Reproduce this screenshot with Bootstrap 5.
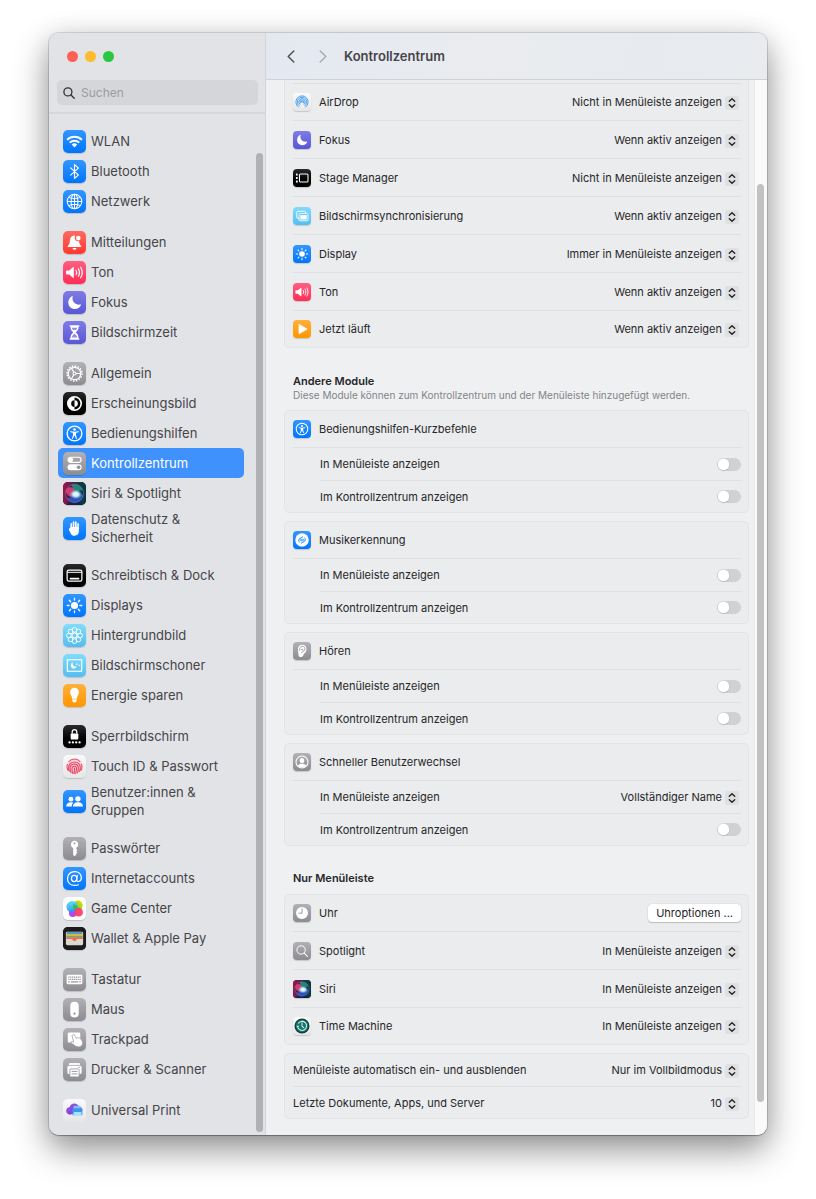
<!DOCTYPE html>
<html lang="de">
<head>
<meta charset="utf-8">
<meta name="viewport" content="width=device-width, initial-scale=1">
<title>Kontrollzentrum</title>
<link href="https://cdn.jsdelivr.net/npm/bootstrap@5.3.0/dist/css/bootstrap.min.css" rel="stylesheet">
<style>
  body { font-family: Inter, "Liberation Sans", sans-serif; font-size: 12px; line-height: 16px; color: #262628; background: #fff; padding: 33px 49px 65px; }
  .window { border-radius: 10px; background: #eff0f2; box-shadow: 0 0 0 1px rgba(0,0,0,.12), 0 1px 1px rgba(0,0,0,.25), 0 14px 34px rgba(0,0,0,.44), 0 0 24px rgba(0,0,0,.06); }

  /* Sidebar */
  .sidebar { width: 217px; background: #e2e3e7; border-right: 1px solid #d3d4d8; border-radius: 10px 0 0 10px; }
  .sidebar-head { padding: 18px 7px 7px 8px; border-bottom: 2px solid #d6d7db; }
  .lights { gap: 7px; padding-left: 10px; margin-bottom: 18px; }
  .light { width: 11px; height: 11px; border-radius: 50%; border: 0; padding: 0; }
  .light-close { background: #fe5f57; }
  .light-min { background: #febb2e; }
  .light-max { background: #28c840; }
  .search { height: 25px; padding: 0 6px; gap: 6px; border-radius: 5px; background: #d5d6d9; }
  .search input { min-width: 0; flex: 1; border: 0; padding: 0; background: transparent; font-size: 12px; outline: 0; }
  .search input::placeholder { color: #9b9ca0; opacity: 1; }
  .nav-area { padding: 12px 0 9px 9px; }
  .nav-group + .nav-group { margin-top: 11px; }
  .side-link { display: flex; align-items: center; gap: 5px; min-height: 30px; padding: 3px 5px; border-radius: 5px; font-size: 13px; line-height: 18px; color: #454548; text-decoration: none; }
  .side-link.two-line { min-height: 41px; padding: 2px 5px 3px; }
  .side-link.active { background: #3f92fe; color: #fff; }
  .thumb { width: 7px; border-radius: 4px; flex: none; }
  .side-thumb { background: #b0b1b4; margin: 39px 2px 3px 12px; }

  /* App icon tiles */
  .tile { width: 23px; height: 23px; flex: none; border-radius: 5px; box-shadow: 0 1px 1px rgba(0,0,0,.16); color: #fff; overflow: hidden; }
  .tile-sm { width: 18px; height: 18px; border-radius: 4px; }
  .tile svg { display: block; width: 100%; height: 100%; }
  .t-blue { background: linear-gradient(#3296ff, #0075fb); }
  .t-red { background: linear-gradient(#ff6a60, #ff3a30); }
  .t-pink { background: linear-gradient(#ff5f83, #ff2d55); }
  .t-indigo { background: linear-gradient(#7f7ce6, #5856d6); }
  .t-gray { background: linear-gradient(#b2b2b6, #8c8c90); }
  .t-black { background: linear-gradient(#2a2a2a, #000 60%); }
  .t-cyan { background: linear-gradient(#80dcfa, #54bdf0); }
  .t-orange { background: linear-gradient(#ffb13b, #ff9500); }
  .t-white { background: linear-gradient(#fafafa, #e6e6e6); }
  .t-paper { background: #fff; }

  /* Main pane */
  .titlebar { height: 47px; padding: 0 21px; gap: 24px; border-bottom: 1px solid #cfd1d5; border-top-right-radius: 10px; background: linear-gradient(100deg, #e4e8f1 0%, #eaecef 45%, #e7ebef 75%, #e9ebef 100%); }
  .titlebar h1 { font-size: 13px; line-height: 18px; font-weight: 600; color: #454548; margin: 0 0 0 -7px; }
  .navbtn { border: 0; background: none; padding: 0; width: 8px; height: 14px; display: flex; align-items: center; }
  .pane { padding: 0 5px 16px 18px; min-width: 0; }
  .track { padding: 0 3px 0 2px; border-left: 1px solid #e9eaeb; background: #fafafa; border-bottom-right-radius: 10px; }
  .main-thumb { background: #c2c2c3; margin: 104px 0 33px; }
  .panel { border: 1px solid #e3e4e6; border-radius: 5px; background: #ebecee; padding: 0 7px 0 8px; }
  .panel + .panel { margin-top: 8px; }
  .panel-cut { border-top: 0; border-radius: 0 0 5px 5px; padding-top: 3px; }
  .panel-cut > :first-child { border-top: 1px solid #dfe0e2; }
  .entry { display: flex; align-items: center; justify-content: space-between; height: 38px; border-bottom: 1px solid #dfe0e2; }
  .entry:first-child { height: 37px; }
  .panel-cut .entry:first-child { height: 38px; }
  .entry:last-child { border-bottom: 0; height: 36px; }
  .entry.low { height: 33px; }
  .entry.low:last-child { height: 31px; }
  .entry.sub { margin-left: 27px; }
  .entry-name { display: flex; align-items: center; gap: 8px; }
  .section-head { padding: 25px 0 8px; }
  .section-head.first-head { padding-top: 26px; }
  .pane h2 { font-size: 11px; line-height: 15px; font-weight: 600; margin: 0; padding-left: 9px; }
  .hint { font-size: 10px; line-height: 13px; color: #838487; margin: 0; padding-left: 9px; }
  .entry, .picker, .push { font-size: 11px; line-height: 16px; }
  .picker { appearance: none; border: 0; margin: 0 2px 0 0; padding: 0 17px 0 0; height: 16px; color: inherit; text-align-last: right; outline-offset: 2px;
    background: url("data:image/svg+xml,%3Csvg xmlns='http://www.w3.org/2000/svg' viewBox='0 0 14 14'%3E%3Crect width='14' height='14' rx='3' fill='%23dfe0e2'/%3E%3Cpath d='M4.3 5.3L7 2.8l2.7 2.5M4.3 8.7L7 11.2l2.7-2.5' fill='none' stroke='%23242426' stroke-width='1.4' stroke-linecap='round' stroke-linejoin='round'/%3E%3C/svg%3E") right bottom / 14px 14px no-repeat; }
  .toggle.form-check-input { width: 24px; height: 13px; margin: 0; border: 0; border-radius: 7px; background-color: #d0d1d3;
    background-image: url("data:image/svg+xml,%3Csvg xmlns='http://www.w3.org/2000/svg' viewBox='0 0 13 13'%3E%3Ccircle cx='6.5' cy='6.8' r='6.2' fill='%23b4b5b7'/%3E%3Ccircle cx='6.5' cy='6.4' r='5.8' fill='%23fff'/%3E%3C/svg%3E"); background-size: 13px 13px; background-position: left center; }
  .toggle.form-check-input:checked { background-color: #3f92fe; background-position: right center; }
  .push { border: 0; border-radius: 4px; background: #fff; color: inherit; height: 18px; padding: 0 8px; box-shadow: 0 0 1px rgba(0,0,0,.3), 0 1px 1px rgba(0,0,0,.18); }
  @media (max-width: 600px) {
    body { padding: 12px; }
    .window { flex-direction: column; }
    .sidebar { width: auto; border-radius: 10px 10px 0 0; }
  }
</style>
</head>
<body>

<svg width="0" height="0" class="position-absolute" aria-hidden="true">
  <defs>
    <radialGradient id="g-orb" cx=".5" cy=".5" r=".5"><stop offset="0" stop-color="#fff"/><stop offset=".45" stop-color="#c4ecfa"/><stop offset="1" stop-color="#5aa8e0" stop-opacity="0"/></radialGradient>
    <linearGradient id="g-siri" x1="0" y1=".35" x2="1" y2=".5"><stop offset="0" stop-color="#a01448"/><stop offset=".25" stop-color="#6e1c50"/><stop offset=".6" stop-color="#123c4c"/><stop offset="1" stop-color="#043a40"/></linearGradient>
    <linearGradient id="g-up" x1="0" y1="0" x2="1" y2="1"><stop offset="0" stop-color="#a05be8"/><stop offset="1" stop-color="#6a35c8"/></linearGradient>
    <linearGradient id="g-gc1" x1="0" y1="0" x2="0" y2="1"><stop offset="0" stop-color="#4fdcf4"/><stop offset="1" stop-color="#2c8cf5"/></linearGradient>
    <linearGradient id="g-gc2" x1="1" y1="0" x2="0" y2="1"><stop offset="0" stop-color="#ffe000"/><stop offset="1" stop-color="#3ecb3c"/></linearGradient>
  </defs>
  <symbol id="i-wifi" viewBox="0 0 24 24"><g fill="none" stroke="currentColor" stroke-width="2"><path d="M4.3 10.2a11 11 0 0 1 15.4 0"/><path d="M7 13.2a7.2 7.2 0 0 1 10 0"/></g><path d="M12 18.2l-2.9-3a4.2 4.2 0 0 1 5.8 0z" fill="currentColor"/></symbol>
  <symbol id="i-bt" viewBox="0 0 24 24"><path d="M8 8.2l8 7.4-4 3.6V4.8l4 3.6-8 7.4" fill="none" stroke="currentColor" stroke-width="1.2" stroke-linejoin="round" stroke-linecap="round"/></symbol>
  <symbol id="i-globe" viewBox="0 0 24 24"><g fill="none" stroke="currentColor" stroke-width="1.1"><circle cx="12" cy="12" r="7.6"/><ellipse cx="12" cy="12" rx="3.6" ry="7.6"/><path d="M12 4.4v15.2M4.4 12h15.2M6 7.7c3.500 1.600 8.500 1.600 12 0M6 16.300c3.500-1.600 8.500-1.600 12 0"/></g></symbol>
  <symbol id="i-bell" viewBox="0 0 24 24"><path fill="currentColor" d="M12.600 5.400a3.600 3.600 0 0 0 4.200 5.200c.2 2.700 1 3.800 2 4.700.6.600.2 1.500-.6 1.500H5.800c-.8 0-1.200-.9-.6-1.500 1.100-1.100 1.800-2.200 2-5.200.2-2.800 1.500-4.600 3.500-5.100.5-.9 1.500-.7 1.900.4z"/><path fill="currentColor" d="M10 17.700h4c-.2 1.100-.9 1.900-2 1.900s-1.800-.8-2-1.900z"/><circle cx="16" cy="7.400" r="2.400" fill="currentColor"/></symbol>
  <symbol id="i-sound" viewBox="0 0 24 24"><path fill="currentColor" d="M4 9.800h2.500l3.800-3.300c.4-.4 1-.1 1 .5v10c0 .6-.6.900-1 .5l-3.800-3.300H4c-.5 0-.8-.3-.8-.8v-2.800c0-.5.3-.8.8-.8z"/><path d="M13.600 9.700c.9 1.500.9 3.100 0 4.600M16 8c1.500 2.600 1.500 5.400 0 8M18.400 6.500c2.200 3.600 2.200 7.400 0 11" fill="none" stroke="currentColor" stroke-width="1.200" stroke-linecap="round"/></symbol>
  <symbol id="i-moon" viewBox="0 0 24 24"><path fill="currentColor" d="M10.200 5.300c-1.600 4.900 2.200 9.900 8.300 8.800.3 0 .5.200.3.500-1.200 2.800-3.600 4.300-6.300 4.300-3.900 0-7-3.100-7-6.900 0-3 1.700-5.700 4.300-6.900.3-.2.500 0 .4.200z"/></symbol>
  <symbol id="i-hour" viewBox="0 0 24 24"><path fill="currentColor" d="M7 4.500h10v1.600h-.8c0 3-1 4.400-3 5.900 2 1.500 3 2.900 3 5.900h.8v1.600H7v-1.600h.8c0-3 1-4.400 3-5.900-2-1.500-3-2.900-3-5.900H7z"/><path d="M9.300 7h5.400c-.2 1.200-.6 2-1.200 2.500h-3C9.900 9 9.500 8.200 9.300 7zM12 13.200c1.800 1.200 2.500 2 2.700 4H9.300c.2-2 .9-2.800 2.700-4z" fill="#6b68de" opacity=".75"/></symbol>
  <symbol id="i-gear" viewBox="0 0 24 24"><g fill="none" stroke="currentColor"><circle cx="12" cy="12" r="7.800" stroke-width="1.600" stroke-dasharray="1.600 1.460"/><circle cx="12" cy="12" r="6.500" stroke-width="1.300"/><path d="M12 12h6.500M12 12L8.800 6.400M12 12l-3.200 5.600" stroke-width="1.100"/><circle cx="12" cy="12" r="1.600" stroke-width="1.100" fill="#a0a0a4"/></g></symbol>
  <symbol id="i-look" viewBox="0 0 24 24"><circle cx="12" cy="12" r="7" fill="none" stroke="currentColor" stroke-width="1.700"/><path fill="currentColor" d="M12 5a7 7 0 0 0 0 14v-3.500a3.500 3.500 0 0 1 0-7z"/><path fill="currentColor" d="M12 8.500a3.500 3.500 0 0 1 0 7z"/></symbol>
  <symbol id="i-access" viewBox="0 0 24 24"><circle cx="12" cy="12" r="7.700" fill="none" stroke="currentColor" stroke-width="1.400"/><circle cx="12" cy="7.900" r="1.300" fill="currentColor"/><path fill="currentColor" d="M8 9.600l4 .6 4-.6c.6 0 .7.800.1 1l-2.500.7v2.300l1 3.500c.1.600-.7.800-.9.300L12 13.900l-1.700 3.500c-.2.500-1 .3-.9-.3l1-3.500v-2.300l-2.500-.7c-.6-.2-.5-1 .1-1z"/></symbol>
  <symbol id="i-switches" viewBox="0 0 24 24"><rect x="5.300" y="5.500" width="13.600" height="5.400" rx="2.700" fill="none" stroke="currentColor" stroke-width="1.200"/><circle cx="8.200" cy="8.200" r="2.400" fill="currentColor"/><rect x="4.700" y="12.700" width="14.800" height="6.400" rx="3.200" fill="currentColor"/><circle cx="16.300" cy="15.900" r="1.900" fill="#909094"/></symbol>
  <symbol id="i-siri" viewBox="0 0 24 24"><path fill="url(#g-siri)" d="M0 0h24v24H0z"/><path fill="#0a1650" opacity=".6" d="M3 24c4-6 14-6 18 0z"/><circle cx="12" cy="12" r="9.500" fill="#1a2250" opacity=".55"/><path d="M9 3a9.500 9.500 0 0 1 11.800 5.600c-3.200-.2-6 .8-8.800 3.400z" fill="#22a57f" opacity=".75"/><path d="M2.800 10c1-5 6-6 8.700-2.500L13 13.500c-3.500 3.500-8 2.500-10.200-3.500z" fill="#ee3f78" opacity=".85"/><path d="M4 16.500c3 .5 6-.5 8-3l9.400-.5c-1 5.500-5 8.500-9.400 8.500-3.500 0-6.500-2-8-5z" fill="#3560dc" opacity=".75"/><circle cx="12" cy="12" r="9.500" fill="none" stroke="#b9a0b8" stroke-width=".7" opacity=".6"/><ellipse cx="13.400" cy="12.800" rx="7" ry="5.200" fill="url(#g-orb)"/></symbol>
  <symbol id="i-hand" viewBox="0 0 24 24"><g stroke="currentColor" stroke-width="1.700" stroke-linecap="round" fill="none"><path d="M8.600 12V7M11 11V5.200M13.400 11V5.400M15.700 12V7.200M7 12.800l1.800 2.600"/></g><path fill="currentColor" d="M7.750 10.500h8.800v4.200c0 3-1.700 4.900-4.400 4.900-2.100 0-3.300-.9-4.200-2.700l-1.700-3.600z"/></symbol>
  <symbol id="i-dock" viewBox="0 0 24 24"><rect x="4.300" y="6.300" width="15.400" height="11.600" rx="1.800" fill="none" stroke="currentColor" stroke-width="1.300"/><path d="M4.500 8.700h15" stroke="currentColor" stroke-width="1"/><rect x="7" y="14.300" width="10" height="2" rx=".6" fill="currentColor"/></symbol>
  <symbol id="i-sun" viewBox="0 0 24 24"><circle cx="12" cy="12" r="3.700" fill="currentColor"/><path d="M12 4.400v1.900M12 17.700v1.900M4.400 12h1.900M17.700 12h1.900M6.600 6.600L8 8M16 16l1.400 1.400M6.600 17.400L8 16M16 8l1.400-1.400" stroke="currentColor" stroke-width="1.400" stroke-linecap="round"/></symbol>
  <symbol id="i-flower" viewBox="0 0 24 24"><g fill="none" stroke="currentColor" stroke-width="1"><circle cx="12" cy="12" r="2.500"/><circle cx="12" cy="6.200" r="2.500"/><circle cx="17.800" cy="12" r="2.500"/><circle cx="12" cy="17.800" r="2.500"/><circle cx="6.200" cy="12" r="2.500"/><circle cx="16.100" cy="7.900" r="2.500"/><circle cx="16.100" cy="16.100" r="2.500"/><circle cx="7.900" cy="16.100" r="2.500"/><circle cx="7.900" cy="7.900" r="2.500"/></g></symbol>
  <symbol id="i-saver" viewBox="0 0 24 24"><rect x="4.500" y="6" width="15" height="12" fill="none" stroke="currentColor" stroke-width="1.200"/><path fill="currentColor" d="M10.300 8.700c-1 2.800 1.200 4.900 4 4.400-.6 1.500-1.900 2.300-3.300 2.300a3.500 3.500 0 0 1-.7-6.700zM14.500 9.200l.4 1 1 .4-1 .4-.4 1-.4-1-1-.4 1-.4zM17 10.800l.3.800.8.300-.8.300-.3.800-.3-.8-.8-.3.800-.3z"/></symbol>
  <symbol id="i-bulb" viewBox="0 0 24 24"><path fill="currentColor" d="M12 4a4.600 4.600 0 0 1 4.600 4.600c0 2.600-1.900 3.500-2.200 6.700H9.600c-.3-3.200-2.200-4.100-2.200-6.700A4.600 4.600 0 0 1 12 4zM9.700 16h4.600v1.200c0 1.300-.8 2.100-2.300 2.100s-2.300-.8-2.300-2.100z"/></symbol>
  <symbol id="i-lock" viewBox="0 0 24 24"><rect x="8" y="8.800" width="8" height="6.200" rx="1" fill="currentColor"/><path d="M9.600 9V7.300a2.400 2.400 0 0 1 4.800 0V9" fill="none" stroke="currentColor" stroke-width="1.300"/><g fill="currentColor"><circle cx="6.800" cy="18.200" r="1.200"/><circle cx="10.300" cy="18.200" r="1.200"/><circle cx="13.800" cy="18.200" r="1.200"/><circle cx="17.300" cy="18.200" r="1.200"/></g></symbol>
  <symbol id="i-touch" viewBox="0 0 24 24"><circle cx="12" cy="12" r="7.600" fill="#f58a9d" opacity=".35"/><g fill="none" stroke="#ee3f60" stroke-width="1.100" stroke-linecap="round"><path d="M6.200 6.800a7.700 7.700 0 0 1 11.600 0M4.600 9.800c-.8 2.300-.3 4.500.5 6M19.300 9.500c.7 2 .6 4.300-.5 6.500M6.500 16.900c-1.500-4.500-.2-9.600 5.500-9.600 5.800 0 7 5.600 5.200 9.800M8.300 18.400c-1.600-4.700-1.300-9 3.700-9 4.700 0 4.500 5.200 3.200 9.200M10.200 19.200c-1.300-4-1.300-7.700 1.700-7.700 3 0 2.400 4.300 1.300 7.900M12 13.600c.2 2 0 4-.5 5.700"/></g></symbol>
  <symbol id="i-users" viewBox="0 0 24 24"><g fill="currentColor"><circle cx="8.300" cy="9.600" r="2.500"/><circle cx="15.600" cy="9.200" r="2.800"/><path d="M3.300 17.300c0-2.700 2.100-4.400 5-4.400.9 0 1.600.1 2.300.4-1 1-1.500 2.300-1.500 4zM10.300 17.300c0-2.800 2.100-4.600 5.300-4.600s5.300 1.800 5.300 4.600z"/></g></symbol>
  <symbol id="i-key" viewBox="0 0 24 24"><path fill="currentColor" fill-rule="evenodd" d="M12 3.800a4 4 0 0 1 1.800 7.500v1.300l1.200 1.200-1.200 1.200 1.200 1.300-1.200 1.200v1L12 20l-1.400-1.300v-7.300A4 4 0 0 1 12 3.800zm0 1.700a1.100 1.100 0 1 0 0 2.200 1.100 1.100 0 0 0 0-2.200z"/></symbol>
  <symbol id="i-at" viewBox="0 0 24 24"><g fill="none" stroke="currentColor" stroke-width="1.300" stroke-linecap="round"><ellipse cx="11.600" cy="12" rx="2.800" ry="3.200"/><path d="M14.800 8.800l-.6 4.600c-.2 2.500 4.900 2.600 4.900-2.100 0-4-3-6.600-6.900-6.600-4.400 0-7.500 3.200-7.500 7.400 0 4.400 3.100 7.200 7.500 7.200 1.500 0 2.800-.3 3.800-.8"/></g></symbol>
  <symbol id="i-game" viewBox="0 0 24 24"><circle cx="10.200" cy="16.900" r="4" fill="#b14af0"/><circle cx="15.600" cy="8.700" r="5" fill="url(#g-gc2)"/><circle cx="9.600" cy="10.300" r="6" fill="url(#g-gc1)" opacity=".92"/><path d="M11 7.500a5 5 0 0 1 4.500 4.500 5 5 0 0 1-3.500 1.600 5 5 0 0 1-1-6.100z" fill="#2fc05a"/><circle cx="16.300" cy="15.800" r="4.500" fill="#ff3b6b" opacity=".93"/></symbol>
  <symbol id="i-wallet" viewBox="0 0 24 24"><path fill="#1b1b1c" d="M0 0h24v24H0z"/><rect x="3" y="5" width="18" height="14" rx="1.500" fill="#dcd9cc"/><path fill="#4d9ccc" d="M4.300 5.300h15.400l.8 2h-17z"/><path fill="#e9b43a" d="M3.500 7.300h17v1.800h-17z"/><path fill="#68b35a" d="M3.500 9h17v2h-17z"/><path fill="#ec6a5b" d="M3.500 10.800h17v1.600h-5.200c-.7 0-1 .3-1.300.8-.4 1-1.100 1.500-2 1.500s-1.600-.5-2-1.500c-.3-.5-.6-.8-1.300-.8H3.500z"/></symbol>
  <symbol id="i-keyb" viewBox="0 0 24 24"><rect x="3.800" y="7" width="16.400" height="10" rx="1.400" fill="currentColor"/><path d="M5.500 9.400h13M5.500 11.800h13" stroke="#96969a" stroke-width="1.300" stroke-dasharray="1.300 .65"/><path d="M5.500 14.400h1.600M8.200 14.400h7.600M16.900 14.400h1.600" stroke="#96969a" stroke-width="1.200"/></symbol>
  <symbol id="i-mouse" viewBox="0 0 24 24"><rect x="7.600" y="4" width="8.800" height="16.300" rx="4.200" fill="currentColor"/><path d="M12 14.800c.8.500 1.200 1 1.200 1.600a1.200 1.200 0 0 1-2.400 0c0-.6.400-1.100 1.200-1.600z" fill="#929296"/></symbol>
  <symbol id="i-track" viewBox="0 0 24 24"><rect x="5" y="4.600" width="13" height="10.600" rx="1.300" fill="currentColor"/><path d="M10 7.200c.8-.8 2-.3 2.300.6l1.500 3c1.800-.9 3.400-.9 4.500.4 2.600 2.700 3 5.300 1 7.300-2.300 1.900-5 1.500-7.300-.4l-3.200-2.300c-1-1 .1-2.100 1.400-1.500l.9.500L9.500 8.300c-.1-.4.100-.8.500-1.100z" fill="currentColor" stroke="#9a9a9e" stroke-width=".8"/></symbol>
  <symbol id="i-print" viewBox="0 0 24 24"><path fill="currentColor" d="M7.500 5.200h9c.8 0 1.300.5 1.300 1.200v.8H6.200v-.8c0-.7.500-1.200 1.300-1.200z" opacity=".9"/><rect x="4.600" y="8" width="14.800" height="8.600" rx="1.600" fill="currentColor"/><rect x="7.200" y="11.400" width="9.600" height="8.300" rx=".8" fill="currentColor" stroke="#98989c" stroke-width=".9"/><path d="M9 14h6M9 16.600h6" stroke="#98989c" stroke-width="1"/><circle cx="16.900" cy="9.800" r=".7" fill="#98989c"/></symbol>
  <symbol id="i-uprint" viewBox="0 0 24 24"><path d="M7.300 16.400c-2.200 0-4-1.700-4-3.800 0-2.200 1.500-3.800 3.500-3.900.6-2.400 2.500-4.100 5-4.100 2.300 0 4.300 1.500 4.900 3.600 2.300.2 3.500 1.600 3.500 3.700z" fill="url(#g-up)"/><path d="M11.500 7h6.500l1 3.500h-8.500z" fill="#7cc4f5"/><rect x="9.800" y="9.700" width="10.400" height="7.500" rx="1" fill="#3f94ee"/><path d="M11.300 13.600h7.700l.6 4.200h-9z" fill="#a6e4ff"/></symbol>
  <symbol id="i-airdrop" viewBox="0 0 24 24"><g fill="none" stroke="#2c8ff2" stroke-width="1.150" stroke-linecap="round"><path d="M7.200 18.700a8.200 8.200 0 1 1 9.600 0M8.200 16.800a6.200 6.200 0 1 1 7.600 0M9.300 15a4.200 4.200 0 1 1 5.400 0M10.200 13.200a2.300 2.300 0 1 1 3.600 0"/></g><path d="M12 12l3.400 7H8.600z" fill="#f2f2f3"/><circle cx="12" cy="11.700" r="1.100" fill="#2c8ff2"/></symbol>
  <symbol id="i-stage" viewBox="0 0 24 24"><rect x="8.600" y="6.700" width="11.400" height="10.600" rx="1.400" fill="none" stroke="currentColor" stroke-width="1.400"/><g fill="currentColor"><rect x="3.900" y="6" width="2.400" height="2.800" rx=".5"/><rect x="3.900" y="10.600" width="2.400" height="2.800" rx=".5"/><rect x="3.900" y="15.200" width="2.400" height="2.800" rx=".5"/></g></symbol>
  <symbol id="i-mirror" viewBox="0 0 24 24"><rect x="5" y="5.700" width="11.800" height="9.300" rx="1.500" fill="none" stroke="currentColor" stroke-width="1.200"/><rect x="8" y="8.800" width="12" height="9.600" rx="1.500" fill="#62c6f3" stroke="currentColor" stroke-width="1.200"/><rect x="9.700" y="10.800" width="8.600" height="5.900" fill="currentColor"/></symbol>
  <symbol id="i-play" viewBox="0 0 24 24"><path fill="currentColor" d="M7.500 6.300v11.400c0 .7.600 1.100 1.200.8l9.900-5.700c.6-.4.600-1.200 0-1.600L8.700 5.500c-.6-.3-1.200.1-1.200.8z"/></symbol>
  <symbol id="i-shazam" viewBox="0 0 24 24"><circle cx="12" cy="12" r="9" fill="currentColor"/><path d="M12.900 7.600l-2.600 2.200c-1.200 1-1.200 2.200-.4 3 .7.600 1.500.6 2.300 0l.6-.5M11.100 16.400l2.600-2.200c1.200-1 1.200-2.200.4-3-.7-.6-1.500-.6-2.300 0l-.6.500M8.600 14.900c-1.500-1.500-1.400-3.700.2-5l.9-.8M15.400 9.100c1.500 1.500 1.400 3.700-.2 5l-.9.800" fill="none" stroke="#2090fb" stroke-width="1.300" stroke-linecap="round"/></symbol>
  <symbol id="i-ear" viewBox="0 0 24 24"><path fill="currentColor" d="M12.300 3.800c3.200 0 5.700 2.500 5.700 5.700 0 2.600-1.300 4.300-3 5.900-1.300 1.300-1.300 4.700-4.500 4.700-2 0-3.300-1.400-3.300-3.500L6.600 9.500c0-3.200 2.500-5.700 5.700-5.700z"/><path d="M8.700 11c-.3-3 1.300-5.200 3.800-5.200 2 0 3.400 1.500 3.400 3.500 0 1.500-.7 2.600-1.700 3.400M10.300 10.600c1-1.600 3-1.400 3.200.2.200 1.400-1.800 1.800-2 3.700" fill="none" stroke="#98989c" stroke-width="1.100" stroke-linecap="round"/></symbol>
  <symbol id="i-person" viewBox="0 0 24 24"><circle cx="12" cy="12" r="8" fill="none" stroke="currentColor" stroke-width="1.400"/><ellipse cx="12" cy="10" rx="3" ry="3.500" fill="currentColor"/><path fill="currentColor" d="M6.500 17c.8-2 2.900-2.800 5.500-2.800s4.700.8 5.500 2.800c-1.400 1.500-3.300 2.300-5.500 2.300S7.900 18.500 6.500 17z"/></symbol>
  <symbol id="i-clock" viewBox="0 0 24 24"><circle cx="12" cy="12" r="8" fill="currentColor"/><path d="M12 6.500v5.800H8" fill="none" stroke="#909094" stroke-width="1.200" stroke-linecap="round"/></symbol>
  <symbol id="i-lens" viewBox="0 0 24 24"><circle cx="10.800" cy="10.600" r="5.600" fill="none" stroke="currentColor" stroke-width="1.300"/><path d="M15 14.800l4.300 4.300" stroke="currentColor" stroke-width="1.500" stroke-linecap="round"/></symbol>
  <symbol id="i-tm" viewBox="0 0 24 24"><circle cx="12" cy="12" r="10" fill="#123c3e"/><circle cx="12" cy="12" r="8.300" fill="#14756c"/><path d="M6.300 13.500a6 6 0 1 0 .6-4.700" fill="none" stroke="#d6f3ee" stroke-width="1.400"/><path d="M4.300 11.500l2 2.600 2.300-2.300z" fill="#d6f3ee"/><path d="M12 8v4.300l2.300 2" fill="none" stroke="#d6f3ee" stroke-width="1.400" stroke-linecap="round"/></symbol>
</svg>

<div class="window d-flex">
  <aside class="sidebar d-flex flex-column flex-shrink-0">
    <div class="sidebar-head">
      <div class="lights d-flex">
        <button class="light light-close" type="button" aria-label="Schließen"></button>
        <button class="light light-min" type="button" aria-label="Minimieren"></button>
        <button class="light light-max" type="button" aria-label="Vergrößern"></button>
      </div>
      <label class="search d-flex align-items-center">
        <svg width="12" height="12" viewBox="0 0 12 12" fill="none" stroke="#303033" stroke-width="1.300" stroke-linecap="round"><circle cx="4.900" cy="4.900" r="4"/><path d="M8 8l3.200 3.200"/></svg>
        <input type="text" placeholder="Suchen" aria-label="Suchen">
      </label>
    </div>
    <div class="d-flex flex-grow-1">
      <nav class="nav-area flex-grow-1">
        <div class="nav-group">
          <a class="side-link" href="#"><span class="tile t-blue"><svg><use href="#i-wifi"/></svg></span>WLAN</a>
          <a class="side-link" href="#"><span class="tile t-blue"><svg><use href="#i-bt"/></svg></span>Bluetooth</a>
          <a class="side-link" href="#"><span class="tile t-blue"><svg><use href="#i-globe"/></svg></span>Netzwerk</a>
        </div>
        <div class="nav-group">
          <a class="side-link" href="#"><span class="tile t-red"><svg><use href="#i-bell"/></svg></span>Mitteilungen</a>
          <a class="side-link" href="#"><span class="tile t-pink"><svg><use href="#i-sound"/></svg></span>Ton</a>
          <a class="side-link" href="#"><span class="tile t-indigo"><svg><use href="#i-moon"/></svg></span>Fokus</a>
          <a class="side-link" href="#"><span class="tile t-indigo"><svg><use href="#i-hour"/></svg></span>Bildschirmzeit</a>
        </div>
        <div class="nav-group">
          <a class="side-link" href="#"><span class="tile t-gray"><svg><use href="#i-gear"/></svg></span>Allgemein</a>
          <a class="side-link" href="#"><span class="tile t-black"><svg><use href="#i-look"/></svg></span>Erscheinungsbild</a>
          <a class="side-link" href="#"><span class="tile t-blue"><svg><use href="#i-access"/></svg></span>Bedienungshilfen</a>
          <a class="side-link active" href="#" aria-current="page"><span class="tile t-gray"><svg><use href="#i-switches"/></svg></span>Kontrollzentrum</a>
          <a class="side-link" href="#"><span class="tile t-black"><svg><use href="#i-siri"/></svg></span>Siri &amp; Spotlight</a>
          <a class="side-link two-line" href="#"><span class="tile t-blue"><svg><use href="#i-hand"/></svg></span><span>Datenschutz &amp;<br>Sicherheit</span></a>
        </div>
        <div class="nav-group">
          <a class="side-link" href="#"><span class="tile t-black"><svg><use href="#i-dock"/></svg></span>Schreibtisch &amp; Dock</a>
          <a class="side-link" href="#"><span class="tile t-blue"><svg><use href="#i-sun"/></svg></span>Displays</a>
          <a class="side-link" href="#"><span class="tile t-cyan"><svg><use href="#i-flower"/></svg></span>Hintergrundbild</a>
          <a class="side-link" href="#"><span class="tile t-cyan"><svg><use href="#i-saver"/></svg></span>Bildschirmschoner</a>
          <a class="side-link" href="#"><span class="tile t-orange"><svg><use href="#i-bulb"/></svg></span>Energie sparen</a>
        </div>
        <div class="nav-group">
          <a class="side-link" href="#"><span class="tile t-black"><svg><use href="#i-lock"/></svg></span>Sperrbildschirm</a>
          <a class="side-link" href="#"><span class="tile t-white"><svg><use href="#i-touch"/></svg></span>Touch ID &amp; Passwort</a>
          <a class="side-link two-line" href="#"><span class="tile t-blue"><svg><use href="#i-users"/></svg></span><span>Benutzer:innen &amp;<br>Gruppen</span></a>
        </div>
        <div class="nav-group">
          <a class="side-link" href="#"><span class="tile t-gray"><svg><use href="#i-key"/></svg></span>Passwörter</a>
          <a class="side-link" href="#"><span class="tile t-blue"><svg><use href="#i-at"/></svg></span>Internetaccounts</a>
          <a class="side-link" href="#"><span class="tile t-paper"><svg><use href="#i-game"/></svg></span>Game Center</a>
          <a class="side-link" href="#"><span class="tile t-black"><svg><use href="#i-wallet"/></svg></span>Wallet &amp; Apple Pay</a>
        </div>
        <div class="nav-group">
          <a class="side-link" href="#"><span class="tile t-gray"><svg><use href="#i-keyb"/></svg></span>Tastatur</a>
          <a class="side-link" href="#"><span class="tile t-gray"><svg><use href="#i-mouse"/></svg></span>Maus</a>
          <a class="side-link" href="#"><span class="tile t-gray"><svg><use href="#i-track"/></svg></span>Trackpad</a>
          <a class="side-link" href="#"><span class="tile t-gray"><svg><use href="#i-print"/></svg></span>Drucker &amp; Scanner</a>
        </div>
        <div class="nav-group">
          <a class="side-link" href="#"><span class="tile t-white shadow-none"><svg><use href="#i-uprint"/></svg></span>Universal Print</a>
        </div>
      </nav>
      <div class="thumb side-thumb"></div>
    </div>
  </aside>

  <main class="d-flex flex-column flex-grow-1">
    <header class="titlebar d-flex align-items-center">
      <button class="navbtn" type="button" aria-label="Zurück"><svg width="8" height="13" viewBox="0 0 8 13" fill="none" stroke="#4a4b4e" stroke-width="1.400" stroke-linecap="round" stroke-linejoin="round"><path d="M6.800 1L1.200 6.500l5.600 5.500"/></svg></button>
      <button class="navbtn" type="button" aria-label="Vorwärts"><svg width="8" height="13" viewBox="0 0 8 13" fill="none" stroke="#a7a9ae" stroke-width="1.400" stroke-linecap="round" stroke-linejoin="round"><path d="M1.200 1l5.600 5.500L1.200 12"/></svg></button>
      <h1>Kontrollzentrum</h1>
    </header>
    <div class="d-flex flex-grow-1">
      <div class="pane flex-grow-1">
        <section class="panel panel-cut">
          <div class="entry"><label class="entry-name" for="s1"><span class="tile tile-sm t-white"><svg><use href="#i-airdrop"/></svg></span>AirDrop</label><select class="picker" id="s1"><option>Nicht in Menüleiste anzeigen</option></select></div>
          <div class="entry"><label class="entry-name" for="s2"><span class="tile tile-sm t-indigo"><svg><use href="#i-moon"/></svg></span>Fokus</label><select class="picker" id="s2"><option>Wenn aktiv anzeigen</option></select></div>
          <div class="entry"><label class="entry-name" for="s3"><span class="tile tile-sm t-black"><svg><use href="#i-stage"/></svg></span>Stage Manager</label><select class="picker" id="s3"><option>Nicht in Menüleiste anzeigen</option></select></div>
          <div class="entry"><label class="entry-name" for="s4"><span class="tile tile-sm t-cyan"><svg><use href="#i-mirror"/></svg></span>Bildschirmsynchronisierung</label><select class="picker" id="s4"><option>Wenn aktiv anzeigen</option></select></div>
          <div class="entry"><label class="entry-name" for="s5"><span class="tile tile-sm t-blue"><svg><use href="#i-sun"/></svg></span>Display</label><select class="picker" id="s5"><option>Immer in Menüleiste anzeigen</option></select></div>
          <div class="entry"><label class="entry-name" for="s6"><span class="tile tile-sm t-pink"><svg><use href="#i-sound"/></svg></span>Ton</label><select class="picker" id="s6"><option>Wenn aktiv anzeigen</option></select></div>
          <div class="entry"><label class="entry-name" for="s7"><span class="tile tile-sm t-orange"><svg><use href="#i-play"/></svg></span>Jetzt läuft</label><select class="picker" id="s7"><option>Wenn aktiv anzeigen</option></select></div>
        </section>

        <div class="section-head first-head">
          <h2>Andere Module</h2>
          <p class="hint">Diese Module können zum Kontrollzentrum und der Menüleiste hinzugefügt werden.</p>
        </div>

        <section class="panel">
          <div class="entry"><div class="entry-name"><span class="tile tile-sm t-blue"><svg><use href="#i-access"/></svg></span>Bedienungshilfen-Kurzbefehle</div></div>
          <div class="entry low sub"><label for="c1">In Menüleiste anzeigen</label><input class="form-check-input toggle" type="checkbox" role="switch" id="c1"></div>
          <div class="entry low sub"><label for="c2">Im Kontrollzentrum anzeigen</label><input class="form-check-input toggle" type="checkbox" role="switch" id="c2"></div>
        </section>
        <section class="panel">
          <div class="entry"><div class="entry-name"><span class="tile tile-sm t-blue"><svg><use href="#i-shazam"/></svg></span>Musikerkennung</div></div>
          <div class="entry low sub"><label for="c3">In Menüleiste anzeigen</label><input class="form-check-input toggle" type="checkbox" role="switch" id="c3"></div>
          <div class="entry low sub"><label for="c4">Im Kontrollzentrum anzeigen</label><input class="form-check-input toggle" type="checkbox" role="switch" id="c4"></div>
        </section>
        <section class="panel">
          <div class="entry"><div class="entry-name"><span class="tile tile-sm t-gray"><svg><use href="#i-ear"/></svg></span>Hören</div></div>
          <div class="entry low sub"><label for="c5">In Menüleiste anzeigen</label><input class="form-check-input toggle" type="checkbox" role="switch" id="c5"></div>
          <div class="entry low sub"><label for="c6">Im Kontrollzentrum anzeigen</label><input class="form-check-input toggle" type="checkbox" role="switch" id="c6"></div>
        </section>
        <section class="panel">
          <div class="entry"><div class="entry-name"><span class="tile tile-sm t-gray"><svg><use href="#i-person"/></svg></span>Schneller Benutzerwechsel</div></div>
          <div class="entry low sub"><label for="s8">In Menüleiste anzeigen</label><select class="picker" id="s8"><option>Vollständiger Name</option></select></div>
          <div class="entry low sub"><label for="c7">Im Kontrollzentrum anzeigen</label><input class="form-check-input toggle" type="checkbox" role="switch" id="c7"></div>
        </section>

        <div class="section-head"><h2>Nur Menüleiste</h2></div>

        <section class="panel">
          <div class="entry"><div class="entry-name"><span class="tile tile-sm t-gray"><svg><use href="#i-clock"/></svg></span>Uhr</div><button class="push" type="button">Uhroptionen ...</button></div>
          <div class="entry"><label class="entry-name" for="s9"><span class="tile tile-sm t-gray"><svg><use href="#i-lens"/></svg></span>Spotlight</label><select class="picker" id="s9"><option>In Menüleiste anzeigen</option></select></div>
          <div class="entry"><label class="entry-name" for="s10"><span class="tile tile-sm t-black"><svg><use href="#i-siri"/></svg></span>Siri</label><select class="picker" id="s10"><option>In Menüleiste anzeigen</option></select></div>
          <div class="entry"><label class="entry-name" for="s11"><span class="tile tile-sm t-white"><svg><use href="#i-tm"/></svg></span>Time Machine</label><select class="picker" id="s11"><option>In Menüleiste anzeigen</option></select></div>
        </section>
        <section class="panel">
          <div class="entry low"><label for="s12">Menüleiste automatisch ein- und ausblenden</label><select class="picker" id="s12"><option>Nur im Vollbildmodus</option></select></div>
          <div class="entry low"><label for="s13">Letzte Dokumente, Apps, und Server</label><select class="picker" id="s13"><option>10</option></select></div>
        </section>
      </div>
      <div class="track d-flex flex-shrink-0"><div class="thumb main-thumb"></div></div>
    </div>
  </main>
</div>

<script src="https://cdn.jsdelivr.net/npm/bootstrap@5.3.0/dist/js/bootstrap.bundle.min.js"></script>
</body>
</html>
